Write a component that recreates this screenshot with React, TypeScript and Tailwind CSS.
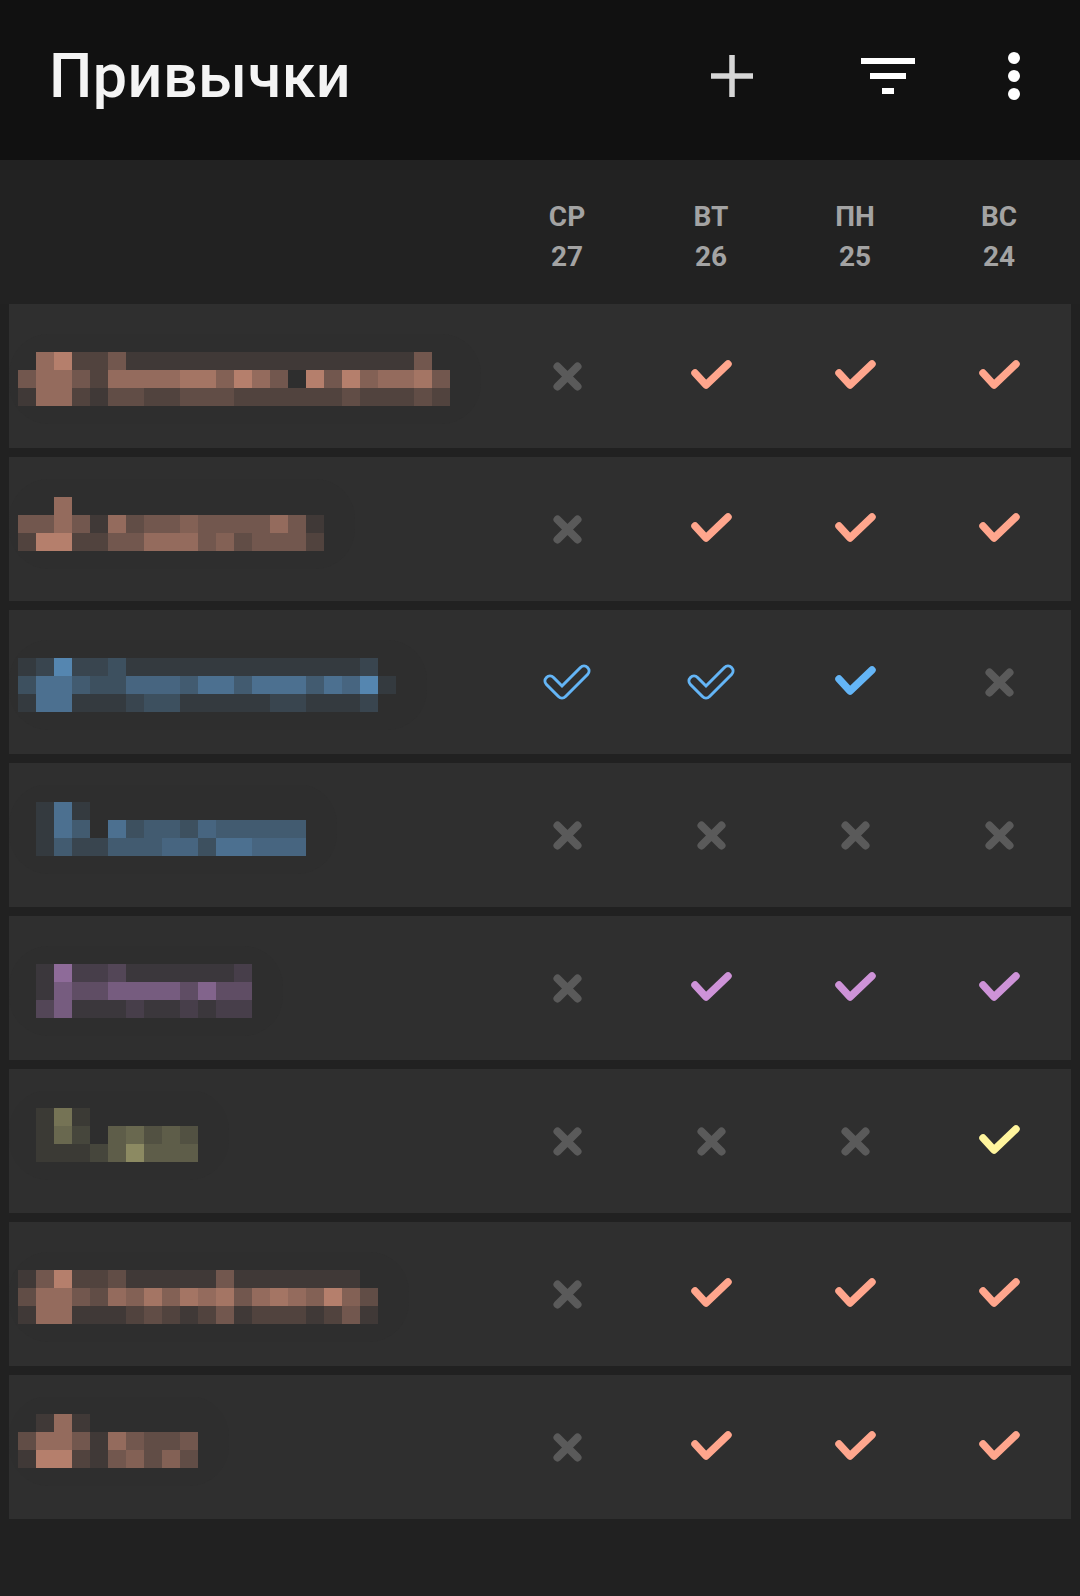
import type { ReactNode } from 'react';

type Mark = 'x' | 'c' | 'o';

const BG = [47, 47, 47];

const hues = {
  salmon: { mark: '#ffa68d', tile: [181, 127, 108] },
  blue: { mark: '#64b5f6', tile: [85, 134, 176] },
  purple: { mark: '#ce93d8', tile: [142, 107, 153] },
  yellow: { mark: '#fff59d', tile: [140, 138, 98] },
};

type Hue = keyof typeof hues;

// pixelated (hidden) habit names: each digit is how strongly the tile shows the colour, 0..8
const habits: { name: string[]; hue: Hue; dy: number; marks: Mark[] }[] = [
  {
    name: ['068224111111111111111140', '466426666775864084856674', '166213322333222222322232'],
    hue: 'salmon',
    dy: 3,
    marks: ['x', 'c', 'c', 'c'],
  },
  {
    name: ['00600000000000000', '44641634454444641', '28822446664534442'],
    hue: 'salmon',
    dy: -5,
    marks: ['x', 'c', 'c', 'c'],
  },
  {
    name: ['128223111111111111120', '366433555466466646581', '166111233111112211120'],
    hue: 'blue',
    dy: 3,
    marks: ['o', 'o', 'c', 'x'],
  },
  {
    name: ['0161000000000000', '0164063443544444', '0142244455366555'],
    hue: 'blue',
    dy: -6,
    marks: ['x', 'x', 'x', 'x'],
  },
  {
    name: ['0182231111112', '0164466664744', '0361112112122'],
    hue: 'purple',
    dy: 3,
    marks: ['x', 'c', 'c', 'c'],
  },
  {
    name: ['0161000000', '0152045343', '0111248444'],
    hue: 'yellow',
    dy: -6,
    marks: ['x', 'x', 'x', 'c'],
  },
  {
    name: ['14822311111411111110', '36643657576746765853', '16611123212412221241'],
    hue: 'salmon',
    dy: 3,
    marks: ['x', 'c', 'c', 'c'],
  },
  {
    name: ['0161000000', '3664164334', '1882145353'],
    hue: 'salmon',
    dy: -6,
    marks: ['x', 'c', 'c', 'c'],
  },
];

const days = [
  ['СР', '27'],
  ['ВТ', '26'],
  ['ПН', '25'],
  ['ВС', '24'],
];

const mix = (rgb: number[], t: number) => {
  const c = rgb.map((v, i) => Math.round(BG[i] + (v - BG[i]) * t));
  return `rgb(${c[0]},${c[1]},${c[2]})`;
};

const Mosaic = ({ rows, hue, dy }: { rows: string[]; hue: Hue; dy: number }) => {
  const cols = rows[0].length;
  const top = 23 + dy;
  return (
    <svg width={cols * 18 + 60} height={100} className="block">
      <rect x={0} y={top - 18} width={cols * 18 + 40} height={90} rx={40} fill="#2c2c2c" opacity={0.4} />
      {rows.map((row, ri) =>
        row.split('').map((ch, ci) =>
          ch === '0' ? null : (
            <rect
              key={`${ri}-${ci}`}
              x={9 + ci * 18}
              y={top + ri * 18}
              width={18}
              height={18}
              fill={mix(hues[hue].tile, Number(ch) / 8)}
            />
          ),
        ),
      )}
    </svg>
  );
};

const Cross = () => (
  <svg width="29" height="29" viewBox="0 0 29 29">
    <path d="M4.5 4.5L24.5 24.5M24.5 4.5L4.5 24.5" stroke="#5a5a5a" strokeWidth="8" strokeLinecap="round" />
  </svg>
);

const Check = ({ color }: { color: string }) => (
  <svg width="44" height="34" viewBox="0 0 44 34">
    <polyline
      points="6,14 17,26 39,5"
      fill="none"
      stroke={color}
      strokeWidth="7.5"
      strokeLinecap="round"
      strokeLinejoin="round"
    />
  </svg>
);

const OutlineCheck = ({ color }: { color: string }) => (
  <svg width="48" height="36" viewBox="0 0 48 36">
    <polyline points="7,17 19,29 41,7" fill="none" stroke={color} strokeWidth="13" strokeLinecap="round" strokeLinejoin="round" />
    <polyline points="7,17 19,29 41,7" fill="none" stroke="#2f2f2f" strokeWidth="7" strokeLinecap="round" strokeLinejoin="round" />
  </svg>
);

const Cell = ({ children }: { children: ReactNode }) => (
  <div className="w-[144px] shrink-0 flex items-center justify-center">{children}</div>
);

export default function App() {
  return (
    <div className="min-h-screen w-[1080px] bg-[#212121] font-['Roboto',sans-serif]">
      <header className="h-[160px] bg-[#111111] flex items-center pl-[49px] pr-[60px] pb-[8px]">
        <h1 className="text-[61px] leading-none font-medium text-[#f4f4f4] tracking-[0.5px]">Привычки</h1>
        <div className="ml-auto flex items-center">
          <svg width="42" height="42" viewBox="0 0 42 42">
            <path d="M21 0V42M0 21H42" stroke="#d6d6d6" strokeWidth="5.5" />
          </svg>
          <svg width="54" height="36" viewBox="0 0 54 36" className="ml-[108px]">
            <rect x="0" y="0" width="54" height="6" fill="#ffffff" />
            <rect x="9" y="15" width="36" height="6" fill="#ffffff" />
            <rect x="21" y="30" width="12" height="6" fill="#ffffff" />
          </svg>
          <svg width="12" height="48" viewBox="0 0 12 48" className="ml-[93px]">
            <circle cx="6" cy="6" r="6" fill="#ffffff" />
            <circle cx="6" cy="24" r="6" fill="#ffffff" />
            <circle cx="6" cy="42" r="6" fill="#ffffff" />
          </svg>
        </div>
      </header>

      <div className="h-[144px] px-[9px] flex bg-[#222222]">
        <div className="flex-1" />
        {days.map(([d, n]) => (
          <div key={d} className="w-[144px] shrink-0 pt-[37px] text-center text-[28px] leading-[40px] font-bold text-[#a3a3a3]">
            <div>{d}</div>
            <div>{n}</div>
          </div>
        ))}
      </div>

      <div className="flex flex-col gap-[9px] px-[9px]">
        {habits.map((h, i) => (
          <div key={i} className="h-[144px] bg-[#2f2f2f] flex items-center">
            <div className="flex-1 overflow-hidden">
              <Mosaic rows={h.name} hue={h.hue} dy={h.dy} />
            </div>
            {h.marks.map((m, j) => (
              <Cell key={j}>
                {m === 'x' ? (
                  <Cross />
                ) : m === 'c' ? (
                  <Check color={hues[h.hue].mark} />
                ) : (
                  <OutlineCheck color={hues[h.hue].mark} />
                )}
              </Cell>
            ))}
          </div>
        ))}
      </div>
    </div>
  );
}
